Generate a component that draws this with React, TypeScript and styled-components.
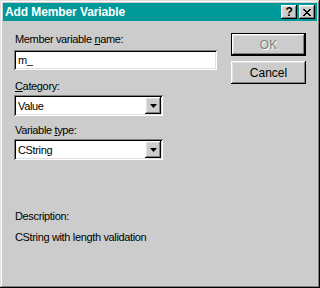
import styled, { createGlobalStyle } from 'styled-components';

const Global = createGlobalStyle`
  html, body {
    margin: 0;
    padding: 0;
    background: #cccccc;
  }
  * {
    box-sizing: border-box;
  }
`;

const raised = `
  box-shadow: inset -1px -1px #000, inset 1px 1px #fff,
    inset -2px -2px #808080, inset 2px 2px #e0e0e0;
`;

const sunken = `
  box-shadow: inset 1px 1px #808080, inset -1px -1px #fff,
    inset 2px 2px #000, inset -2px -2px #e0e0e0;
`;

const Window = styled.div`
  width: 320px;
  height: 288px;
  background: #cccccc;
  padding: 3px;
  display: flex;
  flex-direction: column;
  font-family: 'Liberation Sans', Arial, sans-serif;
  font-size: 11px;
  letter-spacing: -0.35px;
  color: #000;
  box-shadow: inset -1px -1px #000, inset 1px 1px #e0e0e0,
    inset -2px -2px #808080, inset 2px 2px #fff;
`;

const TitleBar = styled.div`
  height: 18px;
  background: #009999;
  display: flex;
  align-items: center;
  padding: 0 2px;
`;

const Title = styled.div`
  color: #fff;
  font-weight: bold;
  font-size: 12px;
  letter-spacing: -0.1px;
  flex: 1;
  line-height: 18px;
`;

const TitleButton = styled.div<{ $gap?: boolean }>`
  width: 16px;
  height: 14px;
  background: #cccccc;
  ${raised}
  margin-left: ${(p) => (p.$gap ? 2 : 0)}px;
  display: flex;
  align-items: center;
  justify-content: center;
  font-weight: bold;
  font-size: 12px;
  line-height: 14px;
`;

const Body = styled.div`
  flex: 1;
  display: flex;
  padding: 12px 11px 0 11px;
  gap: 14px;
`;

const Fields = styled.div`
  flex: 1;
  display: flex;
  flex-direction: column;
`;

const Label = styled.div<{ $top?: number }>`
  line-height: 13px;
  height: 13px;
  margin-top: ${(p) => p.$top ?? 0}px;
  padding-left: 1px;
  white-space: nowrap;
`;

const TextField = styled.div`
  width: 203px;
  height: 20px;
  margin-top: 4px;
  background: #fff;
  ${sunken}
  padding: 3px 3px 0 4px;
  line-height: 14px;
`;

const Combo = styled.div`
  width: 149px;
  height: 21px;
  margin-top: 2px;
  background: #fff;
  ${sunken}
  padding: 2px;
  display: flex;
  align-items: stretch;
`;

const ComboText = styled.div`
  flex: 1;
  padding: 2px 0 0 2px;
  line-height: 14px;
`;

const ComboButton = styled.div`
  width: 16px;
  background: #cccccc;
  ${raised}
  display: flex;
  align-items: center;
  justify-content: center;
`;

const Buttons = styled.div`
  width: 75px;
  display: flex;
  flex-direction: column;
  gap: 5px;
`;

const PushButton = styled.div<{ $default?: boolean; $disabled?: boolean }>`
  height: 23px;
  background: #cccccc;
  display: flex;
  align-items: center;
  justify-content: center;
  letter-spacing: 0;
  color: ${(p) => (p.$disabled ? '#808080' : '#000')};
  text-shadow: ${(p) => (p.$disabled ? '1px 1px #fff' : 'none')};
  ${(p) =>
    p.$default
      ? `box-shadow: inset 0 0 0 1px #000, inset -2px -2px #000, inset 2px 2px #fff,
    inset -3px -3px #808080, inset 3px 3px #e0e0e0;`
      : raised}
  font-size: 12px;
`;

const Arrow = () => (
  <svg width="7" height="4" viewBox="0 0 7 4">
    <path d="M0 0h7L3.5 4z" fill="#000" />
  </svg>
);

const CloseGlyph = () => (
  <svg width="8" height="7" viewBox="0 0 8 7">
    <path
      d="M0 0h2v1h1v1h2V1h1V0h2v1H7v1H6v1H5v1h1v1h1v1h1v1H6V6H5V5H3v1H2v1H0V6h1V5h1V4h1V3H2V2H1V1H0z"
      fill="#000"
    />
  </svg>
);

function Dropdown({ value }: { value: string }) {
  return (
    <Combo>
      <ComboText>{value}</ComboText>
      <ComboButton>
        <Arrow />
      </ComboButton>
    </Combo>
  );
}

export default function App() {
  return (
    <>
      <Global />
      <Window>
        <TitleBar>
          <Title>Add Member Variable</Title>
          <TitleButton>?</TitleButton>
          <TitleButton $gap>
            <CloseGlyph />
          </TitleButton>
        </TitleBar>
        <Body>
          <Fields>
            <Label>
              Member variable <u>n</u>ame:
            </Label>
            <TextField>m_</TextField>
            <Label $top={10}>
              <u>C</u>ategory:
            </Label>
            <Dropdown value="Value" />
            <Label $top={8}>
              Variable <u>t</u>ype:
            </Label>
            <Dropdown value="CString" />
            <Label $top={50}>Description:</Label>
            <Label $top={8}>CString with length validation</Label>
          </Fields>
          <Buttons>
            <PushButton $default $disabled>
              OK
            </PushButton>
            <PushButton>Cancel</PushButton>
          </Buttons>
        </Body>
      </Window>
    </>
  );
}
